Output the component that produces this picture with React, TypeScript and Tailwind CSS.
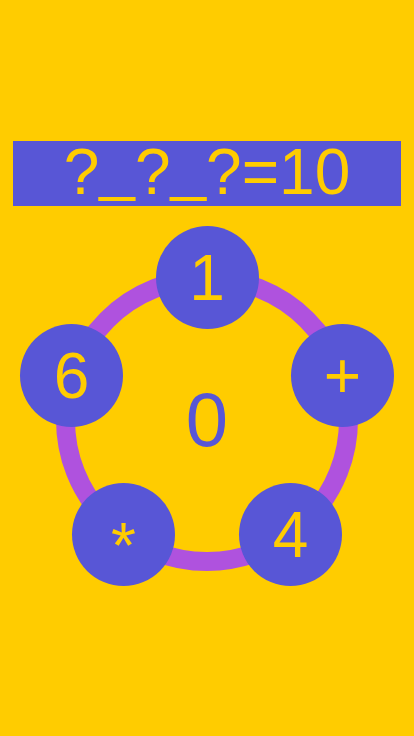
import React from "react";

type Node = { label: string; pos: string; text?: string };

const nodes: Node[] = [
  { label: "1", pos: "left-[155.5px] top-[6px]" },
  { label: "6", pos: "left-[20px] top-[104px]" },
  { label: "+", pos: "left-[291px] top-[104px]" },
  { label: "*", pos: "left-[72px] top-[263px]", text: "translate-y-[11px]" },
  { label: "4", pos: "left-[239px] top-[263px]" },
];

function Blank() {
  return <span className="inline-block -translate-y-[6px]">_</span>;
}

export default function App() {
  return (
    <div
      className="w-[414px] h-[736px] bg-[#FFCC00] flex flex-col items-center pt-[141px]"
      style={{ fontFamily: '"Liberation Sans", Arial, sans-serif' }}
    >
      {/* Target expression */}
      <div className="w-[388px] h-[65px] bg-[#5856D6] flex items-center justify-center">
        <span className="text-[64px] leading-none text-[#FFCC00] -translate-y-[2px]">
          ?<Blank />?<Blank />?=10
        </span>
      </div>

      {/* Ring of pieces */}
      <div className="relative w-[414px] h-[370px] mt-[14px]">
        <div className="absolute left-[56px] top-[49px] w-[302px] h-[302px] rounded-full border-[19px] border-[#AF52DE]" />
        <div className="absolute left-0 top-0 w-[414px] h-[400px] flex items-center justify-center">
          <span className="text-[76px] leading-none text-[#5856D6]">0</span>
        </div>
        {nodes.map((n) => (
          <div
            key={n.label}
            className={`absolute ${n.pos} w-[103px] h-[103px] rounded-full bg-[#5856D6] flex items-center justify-center`}
          >
            <span className={`text-[64px] leading-none text-[#FFCC00] ${n.text ?? ""}`}>{n.label}</span>
          </div>
        ))}
      </div>
    </div>
  );
}
